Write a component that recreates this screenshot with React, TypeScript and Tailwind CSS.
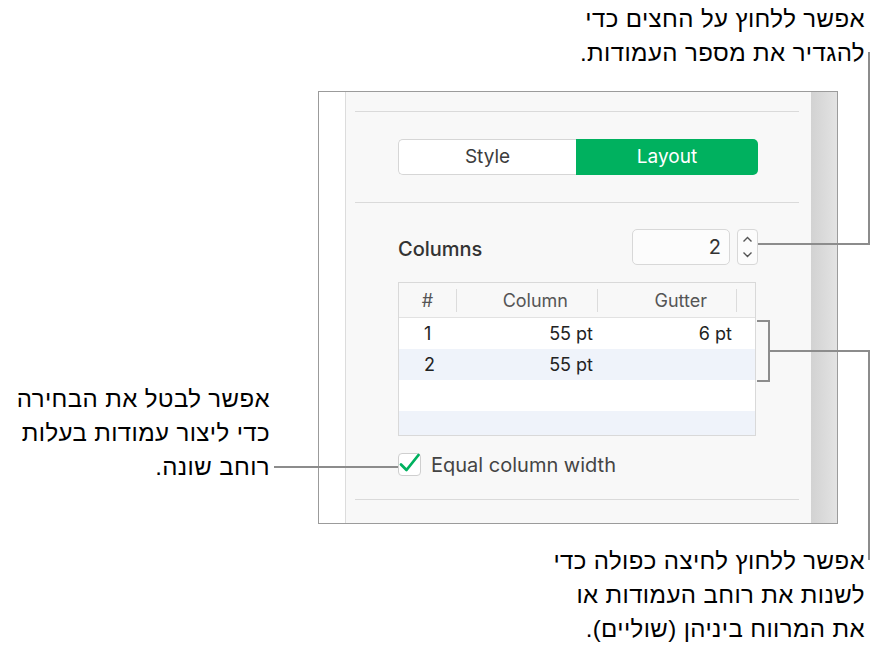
import React from "react";

const hebrew = { fontFamily: '"Liberation Sans", Arial, sans-serif' };
const ui = { fontFamily: 'Inter, "Liberation Sans", sans-serif' };

function Divider() {
  return <div className="ml-[9px] mr-[12px] h-px bg-[#dadada]" />;
}

function HeaderCell({ label, align }: { label: string; align: "center" | "right" }) {
  return (
    <div className="flex items-center">
      <span className={align === "center" ? "flex-1 text-center" : "flex-1 text-right pr-[29px]"}>{label}</span>
      <span className="w-px h-[23px] bg-[#dcdcdc]" />
    </div>
  );
}

const rows = [
  { n: "1", col: "55 pt", gut: "6 pt", bg: "bg-white", h: "h-[31px]" },
  { n: "2", col: "55 pt", gut: "", bg: "bg-[#eff3fa]", h: "h-[31px]" },
  { n: "", col: "", gut: "", bg: "bg-white", h: "h-[31px]" },
  { n: "", col: "", gut: "", bg: "bg-[#eff3fa]", h: "h-[24px]" },
];

function Panel() {
  return (
    <div className="w-[520px] h-[433px] border border-[#9b9b9b] flex" style={ui}>
      <div className="w-[26px] bg-white" />
      <div className="flex-1 border-l border-[#dcdcdc] bg-[#f8f8f8] flex flex-col pt-[19px]">
        <Divider />

        {/* Style / Layout */}
        <div className="mt-[27px] ml-[52px] w-[360px] h-[36px] flex text-[19px]">
          <div className="w-[178px] flex items-center justify-center rounded-l-[5px] border border-r-0 border-[#d6d6d6] bg-white text-[#3c3c3c]">
            Style
          </div>
          <div className="flex-1 flex items-center justify-center rounded-r-[5px] bg-[#00b15f] text-white">
            Layout
          </div>
        </div>

        <div className="mt-[27px]">
          <Divider />
        </div>

        {/* Columns */}
        <div className="mt-[26px] ml-[52px] w-[360px] h-[36px] flex items-center">
          <span className="pt-[3px] text-[20px] font-medium text-[#333]">Columns</span>
          <div className="ml-auto w-[98px] h-[36px] rounded-[5px] border border-[#d8d8d8] bg-[#fcfcfc] flex items-center justify-end pr-[8px] text-[20px] text-[#333]">
            2
          </div>
          <div className="ml-[7px] w-[21px] h-[36px] rounded-[4px] border border-[#d8d8d8] bg-[#fcfcfc] flex flex-col items-center justify-center gap-[8px]">
            <svg width="11" height="7" viewBox="0 0 11 7">
              <path d="M1.5 5.5 L5.5 1.5 L9.5 5.5" fill="none" stroke="#555" strokeWidth="1.4" />
            </svg>
            <svg width="11" height="7" viewBox="0 0 11 7">
              <path d="M1.5 1.5 L5.5 5.5 L9.5 1.5" fill="none" stroke="#555" strokeWidth="1.4" />
            </svg>
          </div>
        </div>

        {/* Table */}
        <div className="mt-[17px] ml-[52px] w-[358px] border border-[#d9d9d9] bg-white text-[18px]">
          <div className="h-[35px] grid grid-cols-[58px_141px_139px_1fr] bg-[#f8f8f8] border-b border-[#e2e2e2] text-[#555]">
            <HeaderCell label="#" align="center" />
            <HeaderCell label="Column" align="right" />
            <HeaderCell label="Gutter" align="right" />
            <div />
          </div>
          {rows.map((r, i) => (
            <div key={i} className={`${r.h} ${r.bg} grid grid-cols-[58px_141px_139px_1fr] items-center text-[#222]`}>
              <span className="pl-[25px]">{r.n}</span>
              <span className="text-right pr-[5px]">{r.col}</span>
              <span className="text-right pr-[5px]">{r.gut}</span>
              <span />
            </div>
          ))}
        </div>

        {/* Checkbox */}
        <div className="mt-[17px] ml-[52px] h-[23px] flex items-center">
          <div className="w-[23px] h-[23px] rounded-[4px] border border-[#cfcfcf] bg-white flex items-center justify-center">
            <svg width="23" height="23" viewBox="0 0 23 23" className="overflow-visible">
              <path d="M3 11.5 L8.5 17 L20.5 2" fill="none" stroke="#00b15f" strokeWidth="2.8" strokeLinecap="round" strokeLinejoin="round" />
            </svg>
          </div>
          <span className="ml-[10px] text-[20px] text-[#444]">Equal column width</span>
        </div>

        <div className="mt-[23px]">
          <Divider />
        </div>
      </div>
      <div className="w-[26px] bg-gradient-to-r from-[#d2d2d2] to-[#e3e3e3]" />
    </div>
  );
}

export default function App() {
  return (
    <div className="relative w-[872px] h-[652px] bg-white overflow-hidden">
      <div className="flex flex-col">
        <div dir="rtl" className="self-end mr-[7px] mt-[2px] text-right text-[24px] tracking-[0.4px] leading-[34px] text-black" style={hebrew}>
          <div>אפשר ללחוץ על החצים כדי</div>
          <div>להגדיר את מספר העמודות.</div>
        </div>

        <div className="mt-[21px] flex items-start">
          <div dir="rtl" className="w-[270px] mt-[291px] pl-[1px] text-right text-[24px] tracking-[0.4px] leading-[34px] text-black" style={hebrew}>
            <div>אפשר לבטל את הבחירה</div>
            <div>כדי ליצור עמודות בעלות</div>
            <div>רוחב שונה.</div>
          </div>
          <div className="ml-[48px]">
            <Panel />
          </div>
        </div>

        <div dir="rtl" className="self-end mr-[7px] mt-[20px] text-right text-[24px] tracking-[0.4px] leading-[34px] text-black" style={hebrew}>
          <div>אפשר ללחוץ לחיצה כפולה כדי</div>
          <div>לשנות את רוחב העמודות או</div>
          <div>את המרווח ביניהן (שוליים).</div>
        </div>
      </div>

      {/* callout lines */}
      <svg className="absolute inset-0 pointer-events-none" width="872" height="652">
        <g fill="none" stroke="#8c8c8c" strokeWidth="2">
          <polyline points="758,244 869,244 869,52" />
          <polyline points="757,321 769,321 769,381 757,381" />
          <polyline points="769,351 869,351 869,560" />
          <polyline points="274,467 398,467" />
        </g>
      </svg>
    </div>
  );
}
